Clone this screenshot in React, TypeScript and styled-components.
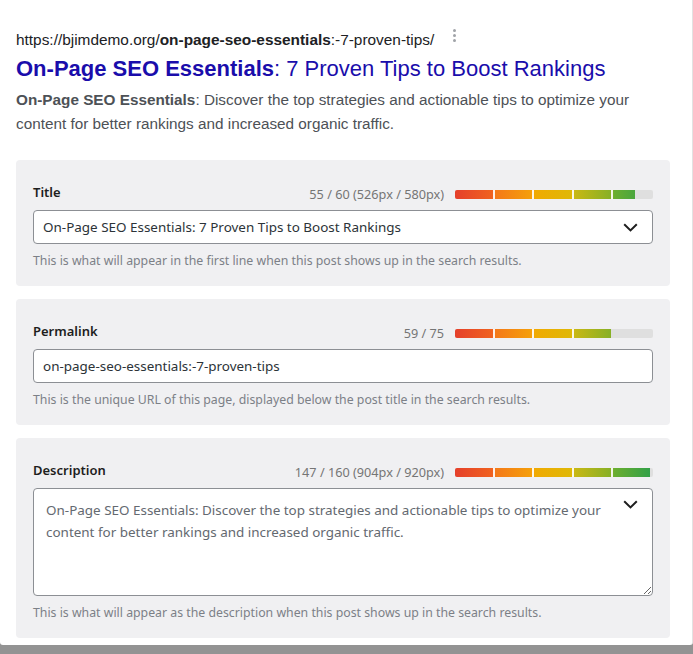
import React from "react";
import styled, { createGlobalStyle } from "styled-components";

const GlobalStyle = createGlobalStyle`
  html, body { margin: 0; padding: 0; }
  body {
    background: #939393;
    min-height: 654px;
    font-family: "Noto Sans", "Open Sans", sans-serif;
  }
  * { box-sizing: border-box; }
`;

const Page = styled.div`
  width: 693px;
  height: 645px;
  background: #ffffff;
  border-right: 1px solid #e2e2e2;
  border-radius: 0 0 3px 3px;
  padding: 30px 22px 0 16px;
  overflow: hidden;
`;

const Serp = styled.div`
  font-family: "Liberation Sans", Arial, sans-serif;
  margin-bottom: 24px;
`;

const UrlRow = styled.div`
  display: flex;
  align-items: center;
  height: 20px;
  margin-bottom: 6px;
`;

const Url = styled.span`
  font-size: 15.4px;
  line-height: 20px;
  color: #202124;
  b { font-weight: 700; }
`;

const MoreButton = styled.span`
  display: flex;
  flex-direction: column;
  gap: 2px;
  margin-left: 19px;
  margin-top: -10px;
  i {
    display: block;
    width: 3px;
    height: 3px;
    border-radius: 50%;
    background: #a0a3a8;
  }
`;

const SerpTitle = styled.div`
  font-size: 22px;
  line-height: 26px;
  color: #1a0dab;
  margin-bottom: 6px;
  b { font-weight: 700; }
`;

const SerpDesc = styled.div`
  font-size: 15.3px;
  line-height: 24px;
  color: #4d5156;
  b { font-weight: 700; }
`;

const Cards = styled.div`
  display: flex;
  flex-direction: column;
  gap: 13px;
`;

const Card = styled.section`
  background: #f0f0f2;
  border-radius: 4px;
  padding: 24px 17px 16px;
`;

const Header = styled.div`
  display: flex;
  align-items: center;
  height: 20px;
  margin-bottom: 6px;
`;

const Label = styled.span`
  font-size: 13px;
  line-height: 16px;
  font-weight: 600;
  color: #1e1e1e;
  flex: 1;
  align-self: flex-start;
`;

const Counter = styled.span`
  font-size: 12.7px;
  color: #757575;
  margin-right: 11px;
`;

const Track = styled.div`
  width: 198px;
  height: 9px;
  background: #dfdfdf;
  border-radius: 2px;
  overflow: hidden;
  display: flex;
`;

const Fill = styled.div`
  height: 100%;
  background-image:
    repeating-linear-gradient(to right, transparent 0 37.6px, rgba(255,255,255,0.9) 37.6px 39.6px),
    linear-gradient(to right, #e5402b 0%, #f0621f 19%, #f47919 20.5%, #f5a00a 39%, #f0aa02 40.5%, #dfb807 59%, #c8b814 60.5%, #86b026 79%, #6aae2f 80.5%, #2e9f4a 100%);
  background-size: 198px 100%;
  background-repeat: no-repeat;
`;

const SelectBox = styled.div`
  height: 34px;
  background: #fff;
  border: 1px solid #8c8f94;
  border-radius: 4px;
  display: flex;
  align-items: center;
  padding: 0 14px 0 9px;
  font-size: 13.45px;
  color: #2c3338;
`;

const SelectText = styled.span`
  flex: 1;
`;

const TextWrap = styled.div`
  position: relative;
`;

const TextArea = styled.textarea`
  display: block;
  width: 100%;
  height: 108px;
  margin: 0;
  background: #fff;
  border: 1px solid #8c8f94;
  border-radius: 4px;
  padding: 10px 40px 10px 12px;
  font-family: "Noto Sans", "Open Sans", sans-serif;
  font-size: 13.45px;
  line-height: 22px;
  color: #646970;
  resize: vertical;
  outline: none;
`;

const Chevron = styled.svg<{ $overlay?: boolean }>`
  flex: none;
  ${(p) => (p.$overlay ? "position: absolute; top: 12px; right: 15px;" : "")}
`;

const Help = styled.p`
  margin: 8px 0 0;
  font-size: 12.3px;
  line-height: 18px;
  color: #7c8087;
`;

const ChevronIcon = ({ overlay }: { overlay?: boolean }) => (
  <Chevron $overlay={overlay} width="15" height="9" viewBox="0 0 15 9">
    <path d="M1.2 1.2 L7.5 7.4 L13.8 1.2" fill="none" stroke="#1e1e1e" strokeWidth="2" />
  </Chevron>
);

const Meter = ({ pct }: { pct: number }) => (
  <Track>
    <Fill style={{ width: `${pct}%` }} />
  </Track>
);

export default function App() {
  const desc =
    "On-Page SEO Essentials: Discover the top strategies and actionable tips to optimize your content for better rankings and increased organic traffic.";
  return (
    <>
      <GlobalStyle />
      <Page>
        <Serp>
          <UrlRow>
            <Url>
              https://bjimdemo.org/<b>on-page-seo-essentials</b>:-7-proven-tips/
            </Url>
            <MoreButton>
              <i />
              <i />
              <i />
            </MoreButton>
          </UrlRow>
          <SerpTitle>
            <b>On-Page SEO Essentials</b>: 7 Proven Tips to Boost Rankings
          </SerpTitle>
          <SerpDesc>
            <b>On-Page SEO Essentials</b>: Discover the top strategies and actionable tips to optimize your
            content for better rankings and increased organic traffic.
          </SerpDesc>
        </Serp>
        <Cards>
          <Card>
            <Header>
              <Label>Title</Label>
              <Counter>55 / 60 (526px / 580px)</Counter>
              <Meter pct={(526 / 580) * 100} />
            </Header>
            <SelectBox>
              <SelectText>On-Page SEO Essentials: 7 Proven Tips to Boost Rankings</SelectText>
              <ChevronIcon />
            </SelectBox>
            <Help>This is what will appear in the first line when this post shows up in the search results.</Help>
          </Card>
          <Card>
            <Header>
              <Label>Permalink</Label>
              <Counter>59 / 75</Counter>
              <Meter pct={(59 / 75) * 100} />
            </Header>
            <SelectBox>
              <SelectText>on-page-seo-essentials:-7-proven-tips</SelectText>
            </SelectBox>
            <Help>This is the unique URL of this page, displayed below the post title in the search results.</Help>
          </Card>
          <Card>
            <Header>
              <Label>Description</Label>
              <Counter>147 / 160 (904px / 920px)</Counter>
              <Meter pct={(904 / 920) * 100} />
            </Header>
            <TextWrap>
              <TextArea readOnly value={desc} />
              <ChevronIcon overlay />
            </TextWrap>
            <Help>This is what will appear as the description when this post shows up in the search results.</Help>
          </Card>
        </Cards>
      </Page>
    </>
  );
}
